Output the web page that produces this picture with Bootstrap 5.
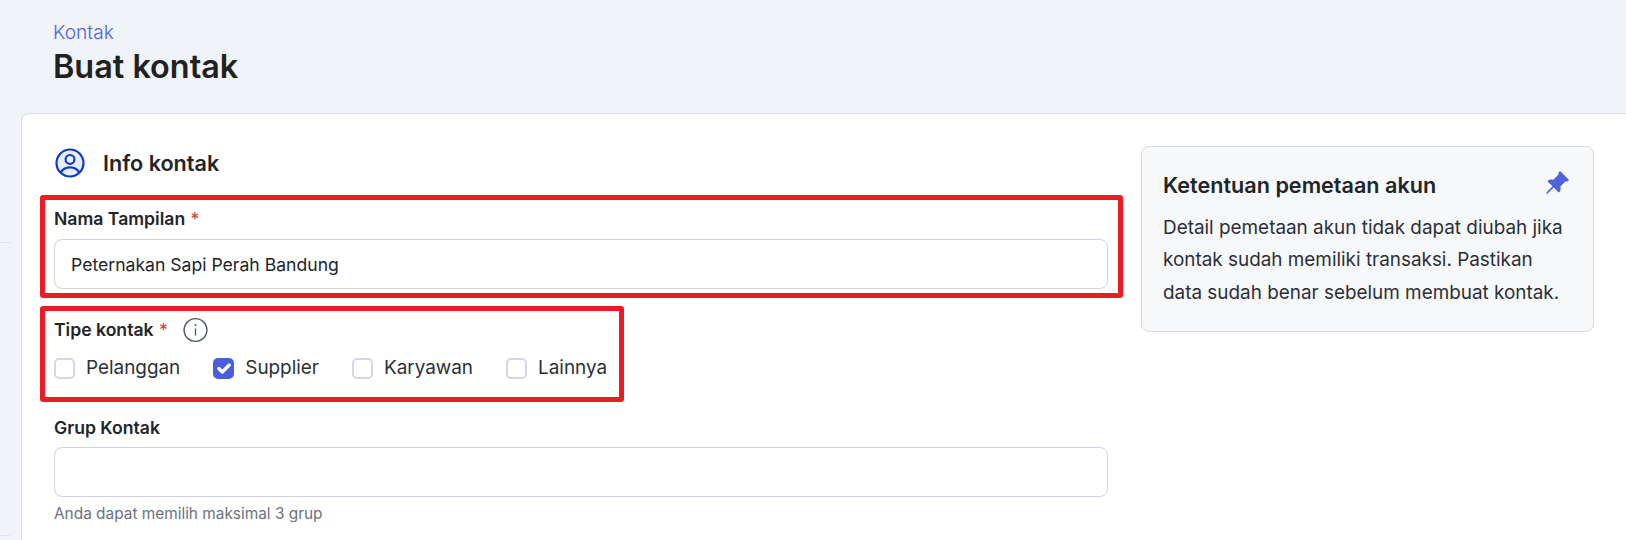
<!DOCTYPE html>
<html lang="id">
<head>
<meta charset="utf-8">
<title>Buat kontak</title>
<link href="https://cdn.jsdelivr.net/npm/bootstrap@5.3.0/dist/css/bootstrap.min.css" rel="stylesheet">
<style>
html,body{height:540px;overflow:hidden}
body{background:#f0f3f8;font-family:Inter,"Liberation Sans",sans-serif;color:#212529;position:relative}
.edge-line{height:1px;width:10px;background:#dfe3ea}
.edge-a{position:absolute;left:0;top:242px}
.edge-b{position:absolute;left:0;top:535px}
.page-head{padding:21px 0 0 53px;height:113px}
.crumb{font-size:19.2px;line-height:22px;color:#4f62dc;font-weight:300;display:block;text-decoration:none;margin-bottom:2px}
.page-title{font-size:32.4px;font-weight:600;line-height:44px;margin:0;color:#212121}
.sheet{margin-left:21px;width:1605px;height:427px;border:1px solid #d8dce5;border-right:0;border-bottom:0;border-radius:8px 0 0 0;background:#fff;padding:32px 32px 0 32px;--bs-card-border-color:#d8dce5}
.main-col{width:1054px;flex:none}
.side-col{width:453px;flex:none;margin-left:33px}
.sec-head{height:49px;padding:2px 0 0 1px}
.sec-title{font-size:21.6px;font-weight:600;line-height:30px;margin:0 0 0 18px;color:#212529}
.anno{border:5px solid #ed1c24;border-radius:3px;margin:0 -15px 0 -14px;padding:6px 10px 3px 9px;height:103px}
.anno-b{width:584px;height:96px;margin:8px 0 0 -14px;padding:6px 9px 0 9px}
.fld-label{font-size:17.6px;font-weight:600;line-height:26px;margin-bottom:7px;color:#212529}
.req{color:#e0362c;font-weight:400;margin-left:1px}
.fld-input{height:50px;border:1px solid #cfd4df;border-radius:8px;padding:6px 16px;font-size:17.6px;color:#212529;font-family:inherit}
.info-ico{margin-left:15px}
.chk-row{gap:33px;margin-top:12px}
.chk-item{display:flex;align-items:center;margin:0;padding:0;min-height:0;gap:11px}
.chk-item .form-check-input{width:21px;height:21px;margin:0;float:none;border:2px solid #d3d8e2;border-radius:5px}
.chk-item .form-check-input:checked{background-color:#4a5fdc;border-color:#4a5fdc;background-size:135%;background-position:center}
.chk-item .form-check-label{font-size:18.9px;color:#2b2f36;line-height:26px}
.grp{margin-top:13px}
.grp .fld-label{margin-bottom:6px}
.help{font-size:15.4px;line-height:20px;color:#6b7280;margin-top:7px}
.note{background:#f7f8fa;border:1px solid #d5d9e3;border-radius:8px;height:186px;padding:23px 23px 21px 21px;--bs-card-bg:#f7f8fa}
.note-title{font-size:21.6px;font-weight:600;line-height:30px;margin:0;color:#212529}
.note-body{font-size:18.9px;line-height:32.5px;color:#2b2f38;margin:11.5px 0 0}
</style>
</head>
<body>
<div class="edge-line edge-a"></div>
<div class="edge-line edge-b"></div>
<header class="page-head">
  <a class="crumb" href="#">Kontak</a>
  <h1 class="page-title">Buat kontak</h1>
</header>
<main class="sheet card d-flex flex-row align-items-start">
  <section class="main-col">
    <div class="sec-head d-flex align-items-start">
      <svg width="30" height="30" viewBox="0 0 30 30" aria-hidden="true">
        <circle cx="15" cy="15" r="13.5" fill="#e9edfb" stroke="#0b3cc4" stroke-width="2.2"/>
        <circle cx="15" cy="11.4" r="4.4" fill="#f5f7fe" stroke="#0b3cc4" stroke-width="2.2"/>
        <path d="M5.6 25c1.8-3.8 5.4-5.6 9.4-5.6s7.6 1.8 9.4 5.6" fill="none" stroke="#0b3cc4" stroke-width="2.2"/>
      </svg>
      <h2 class="sec-title">Info kontak</h2>
    </div>
    <div class="anno">
      <label class="form-label fld-label d-block" for="nama">Nama Tampilan <span class="req">*</span></label>
      <input id="nama" class="form-control fld-input" type="text" value="Peternakan Sapi Perah Bandung">
    </div>
    <div class="anno anno-b">
      <div class="d-flex align-items-center">
        <span class="fld-label mb-0">Tipe kontak <span class="req">*</span></span>
        <svg class="info-ico" width="25" height="26" viewBox="0 0 25 26" aria-hidden="true">
          <circle cx="12.5" cy="13" r="11.4" fill="none" stroke="#4b5563" stroke-width="1.4"/>
          <path d="M12.5 11.5v7" stroke="#4b5563" stroke-width="1.3"/>
          <circle cx="12.5" cy="8" r="1" fill="#4b5563"/>
        </svg>
      </div>
      <div class="d-flex chk-row">
        <div class="form-check chk-item"><input class="form-check-input" type="checkbox" id="c1"><label class="form-check-label" for="c1">Pelanggan</label></div>
        <div class="form-check chk-item"><input class="form-check-input" type="checkbox" id="c2" checked><label class="form-check-label" for="c2">Supplier</label></div>
        <div class="form-check chk-item"><input class="form-check-input" type="checkbox" id="c3"><label class="form-check-label" for="c3">Karyawan</label></div>
        <div class="form-check chk-item"><input class="form-check-input" type="checkbox" id="c4"><label class="form-check-label" for="c4">Lainnya</label></div>
      </div>
    </div>
    <div class="grp">
      <label class="form-label fld-label d-block" for="grup">Grup Kontak</label>
      <input id="grup" class="form-control fld-input" type="text">
      <div class="help">Anda dapat memilih maksimal 3 grup</div>
    </div>
  </section>
  <aside class="side-col note card">
    <div class="d-flex justify-content-between align-items-start">
      <h3 class="note-title">Ketentuan pemetaan akun</h3>
      <svg width="26" height="26" viewBox="0 0 16 16" fill="#4f62dc" aria-hidden="true"><path d="M9.828.722a.5.5 0 0 1 .354.146l4.95 4.95a.5.5 0 0 1 0 .707c-.48.48-1.072.588-1.503.588-.177 0-.335-.018-.46-.039l-3.134 3.134a5.927 5.927 0 0 1 .16 1.013c.046.702-.032 1.687-.72 2.375a.5.5 0 0 1-.707 0l-2.829-2.828-3.182 3.182c-.195.195-1.219.902-1.414.707-.195-.195.512-1.22.707-1.414l3.182-3.182-2.828-2.829a.5.5 0 0 1 0-.707c.688-.688 1.673-.767 2.375-.72a5.922 5.922 0 0 1 1.013.16l3.134-3.133a2.772 2.772 0 0 1-.04-.461c0-.43.108-1.022.589-1.503a.5.5 0 0 1 .353-.146z"/></svg>
    </div>
    <p class="note-body">Detail pemetaan akun tidak dapat diubah jika kontak sudah memiliki transaksi. Pastikan data sudah benar sebelum membuat kontak.</p>
  </aside>
</main>
</body>
</html>
